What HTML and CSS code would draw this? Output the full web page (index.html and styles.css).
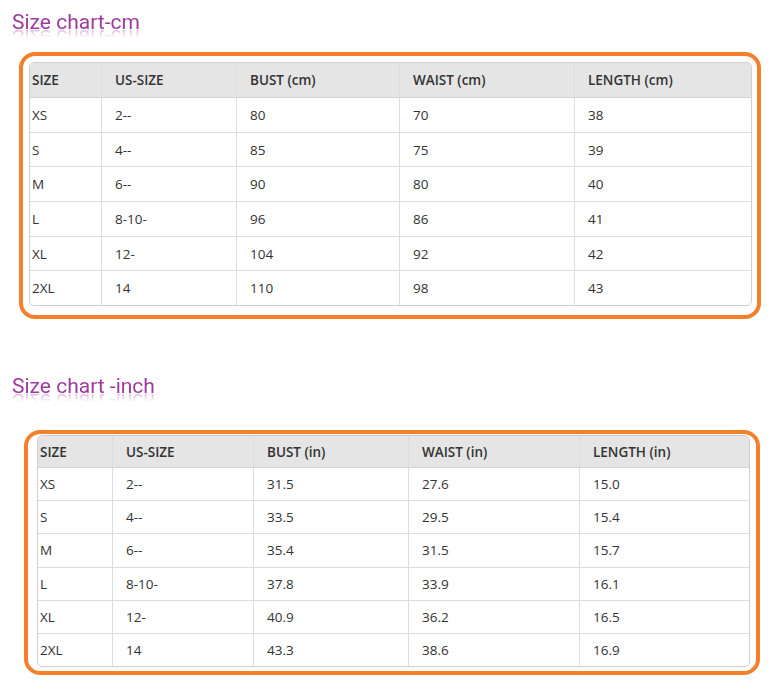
FILE: index.html
```html
<!DOCTYPE html>
<html>
<head>
<meta charset="utf-8">
<link rel="stylesheet" href="styles.css">
</head>
<body>
<h2 class="title title-cm">Size chart-cm</h2>
<div class="frame frame-cm">
  <table class="chart chart-cm">
    <colgroup><col class="c1"><col class="c2"><col class="c3"><col class="c4"><col class="c5"></colgroup>
    <thead><tr><th>SIZE</th><th>US-SIZE</th><th>BUST (cm)</th><th>WAIST (cm)</th><th>LENGTH (cm)</th></tr></thead>
    <tbody>
      <tr><td>XS</td><td>2--</td><td>80</td><td>70</td><td>38</td></tr>
      <tr><td>S</td><td>4--</td><td>85</td><td>75</td><td>39</td></tr>
      <tr><td>M</td><td>6--</td><td>90</td><td>80</td><td>40</td></tr>
      <tr><td>L</td><td>8-10-</td><td>96</td><td>86</td><td>41</td></tr>
      <tr><td>XL</td><td>12-</td><td>104</td><td>92</td><td>42</td></tr>
      <tr><td>2XL</td><td>14</td><td>110</td><td>98</td><td>43</td></tr>
    </tbody>
  </table>
</div>
<h2 class="title title-in">Size chart -inch</h2>
<div class="frame frame-in">
  <table class="chart chart-in">
    <colgroup><col class="c1"><col class="c2"><col class="c3"><col class="c4"><col class="c5"></colgroup>
    <thead><tr><th>SIZE</th><th>US-SIZE</th><th>BUST (in)</th><th>WAIST (in)</th><th>LENGTH (in)</th></tr></thead>
    <tbody>
      <tr><td>XS</td><td>2--</td><td>31.5</td><td>27.6</td><td>15.0</td></tr>
      <tr><td>S</td><td>4--</td><td>33.5</td><td>29.5</td><td>15.4</td></tr>
      <tr><td>M</td><td>6--</td><td>35.4</td><td>31.5</td><td>15.7</td></tr>
      <tr><td>L</td><td>8-10-</td><td>37.8</td><td>33.9</td><td>16.1</td></tr>
      <tr><td>XL</td><td>12-</td><td>40.9</td><td>36.2</td><td>16.5</td></tr>
      <tr><td>2XL</td><td>14</td><td>43.3</td><td>38.6</td><td>16.9</td></tr>
    </tbody>
  </table>
</div>
</body>
</html>
```
FILE: styles.css
```css
html, body {
  margin: 0;
  padding: 0;
  background: #ffffff;
}
body {
  font-family: "Open Sans", "Noto Sans", sans-serif;
  color: #333333;
}
.title {
  margin: 0;
  font-family: Roboto, "Open Sans", sans-serif;
  font-weight: 400;
  font-size: 21px;
  line-height: 24px;
  color: #9e3a9f;
  padding-left: 12px;
  display: block;
  width: max-content;
  -webkit-box-reflect: below -9px linear-gradient(transparent 45%, rgba(0,0,0,0.55));
}
.title-cm {
  margin-top: 10px;
}
.title-in {
  margin-top: 55px;
}
.frame {
  border: 4px solid #f57f2a;
  border-radius: 16px;
  box-sizing: border-box;
}
.frame-cm {
  margin: 18px 0 0 19px;
  width: 742px;
  height: 267px;
  padding: 6px 5px 0 6px;
}
.frame-in {
  margin: 32px 0 0 24px;
  width: 736px;
  height: 245px;
  padding: 1px 6px 0 9px;
}
.chart {
  border-collapse: separate;
  border-spacing: 0;
  border: 1px solid #cfcfcf;
  border-radius: 5px;
  table-layout: fixed;
  font-size: 13.5px;
  color: #333333;
  overflow: hidden;
}
.chart th {
  background: #e5e5e5;
  font-weight: 600;
  text-align: left;
  color: #333333;
}
.chart th, .chart td {
  padding: 0 0 0 13px;
  border-right: 1px solid #dddddd;
  border-bottom: 1px solid #dddddd;
  white-space: nowrap;
}
.chart th:first-child, .chart td:first-child {
  padding-left: 2px;
}
.chart th:last-child, .chart td:last-child {
  border-right: none;
}
.chart tbody tr:last-child td {
  border-bottom: none;
}
.chart th {
  border-bottom: 1px solid #d3d3d3;
}
.chart-cm {
  width: 721px;
}
.chart-cm th {
  height: 34px;
}
.chart-cm td {
  height: 33.7px;
}
.chart-cm .c1 { width: 72px; }
.chart-cm .c2 { width: 135px; }
.chart-cm .c3 { width: 163px; }
.chart-cm .c4 { width: 175px; }
.chart-cm .c5 { width: 176px; }
.chart-in {
  width: 711px;
}
.chart-in th {
  height: 31px;
}
.chart-in td {
  height: 32.2px;
}
.chart-in .c1 { width: 75px; }
.chart-in .c2 { width: 141px; }
.chart-in .c3 { width: 155px; }
.chart-in .c4 { width: 171px; }
.chart-in .c5 { width: 169px; }
```
